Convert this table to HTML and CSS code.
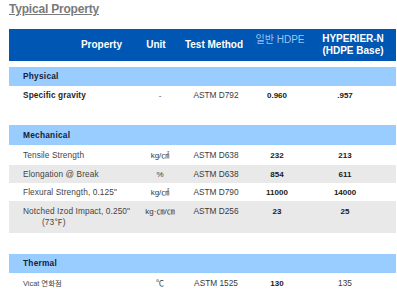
FILE: index.html
```html
<!DOCTYPE html>
<html>
<head>
<meta charset="utf-8">
<link rel="stylesheet" href="styles.css">
</head>
<body>
<div class="page">
  <h1 class="title">Typical Property</h1>
  <table class="props">
    <colgroup>
      <col class="c-prop"><col class="c-unit"><col class="c-test"><col class="c-hdpe"><col class="c-hyp">
    </colgroup>
    <thead>
      <tr class="head">
        <th class="h-prop">Property</th>
        <th class="h-unit">Unit</th>
        <th class="h-test">Test Method</th>
        <th class="h-hdpe">일반 HDPE</th>
        <th class="h-hyp">HYPERIER-N<br>(HDPE Base)</th>
      </tr>
    </thead>
    <tbody>
      <tr class="spacer"><td colspan="5"></td></tr>
      <tr class="band"><td colspan="5">Physical</td></tr>
      <tr class="row r-sg">
        <td class="prop strong">Specific gravity</td>
        <td class="unit">-</td>
        <td class="test">ASTM D792</td>
        <td class="v1 b">0.960</td>
        <td class="v2 b">.957</td>
      </tr>
      <tr class="blank"><td colspan="5"></td></tr>
      <tr class="band band-m"><td colspan="5">Mechanical</td></tr>
      <tr class="row r-t">
        <td class="prop">Tensile Strength</td>
        <td class="unit">kg/㎠</td>
        <td class="test">ASTM D638</td>
        <td class="v1 b">232</td>
        <td class="v2 b">213</td>
      </tr>
      <tr class="row alt r-e">
        <td class="prop">Elongation @ Break</td>
        <td class="unit">%</td>
        <td class="test">ASTM D638</td>
        <td class="v1 b">854</td>
        <td class="v2 b">611</td>
      </tr>
      <tr class="row r-f">
        <td class="prop">Flexural Strength, 0.125"</td>
        <td class="unit">kg/㎠</td>
        <td class="test">ASTM D790</td>
        <td class="v1 b">11000</td>
        <td class="v2 b">14000</td>
      </tr>
      <tr class="row alt r-n">
        <td class="prop">Notched Izod Impact, 0.250"<span class="sub">(73℉)</span></td>
        <td class="unit">kg·㎝/㎝</td>
        <td class="test">ASTM D256</td>
        <td class="v1 b">23</td>
        <td class="v2 b">25</td>
      </tr>
      <tr class="blank blank2"><td colspan="5"></td></tr>
      <tr class="band band-t"><td colspan="5">Thermal</td></tr>
      <tr class="row r-v">
        <td class="prop kr">Vicat 연화점</td>
        <td class="unit">℃</td>
        <td class="test">ASTM 1525</td>
        <td class="v1 b">130</td>
        <td class="v2">135</td>
      </tr>
    </tbody>
  </table>
</div>
</body>
</html>
```

FILE: styles.css
```css
html, body {
  margin: 0;
  padding: 0;
  background: #ffffff;
}
body {
  font-family: "Liberation Sans", Arial, "Noto Sans CJK KR", sans-serif;
  color: #3a3a3a;
}
.page {
  padding: 2px 1px 0 9px;
}
.title {
  margin: 0 0 12px 0;
  font-size: 12px;
  line-height: 15px;
  font-weight: bold;
  letter-spacing: -0.2px;
  color: #7a7a7a;
  text-decoration: underline;
  text-underline-offset: 1px;
}
.props {
  width: 387px;
  border-collapse: collapse;
  table-layout: fixed;
}
.c-prop { width: 131px; }
.c-unit { width: 38px; }
.c-test { width: 72px; }
.c-hdpe { width: 60px; }
.c-hyp { width: 86px; }

.props th, .props td {
  padding: 0;
  white-space: nowrap;
  box-sizing: border-box;
  line-height: 11px;
}
.head th {
  height: 32px;
  background: #0056b3;
  color: #ffffff;
  font-size: 10px;
  font-weight: bold;
  text-align: center;
  vertical-align: middle;
  line-height: 12.5px;
}
.head .h-prop {
  text-align: right;
  padding-right: 18px;
}
.head .h-unit { padding-right: 6px; }
.head .h-hdpe {
  font-weight: normal;
  color: #9fc4ef;
  padding-bottom: 10px;
}

.spacer td { height: 6px; }
.blank td { height: 20px; }
.blank2 td { height: 21px; }

.band td {
  height: 19px;
  background: #99ccff;
  padding-left: 14px;
  font-size: 8.3px;
  font-weight: bold;
  color: #17213a;
  letter-spacing: 0.25px;
  vertical-align: middle;
}
.band-m td { height: 20px; }

.row td {
  height: 20px;
  font-size: 8.3px;
  vertical-align: middle;
  text-align: center;
}
.row.alt td { background: #e9e9e9; }
.r-sg td { height: 19px; }
.r-e td, .r-f td { height: 18px; }
.r-n td { height: 32px; vertical-align: top; padding-top: 5px; }

.row .prop {
  text-align: left;
  padding-left: 14px;
  color: #444444;
  letter-spacing: 0.1px;
}
.row .prop.strong {
  font-weight: bold;
  color: #1f1f1f;
}
.row .unit { font-size: 8px; padding-left: 2px; }
.row .test { padding-left: 4px; }
.row .v1 { padding-right: 6px; }
.row .v2 { padding-right: 16px; }
.row .b {
  font-weight: bold;
  color: #1a1a1a;
  font-size: 8px;
}
.sub {
  display: block;
  padding-left: 19px;
}
.row .kr { font-size: 7.4px; letter-spacing: 0; }
```
